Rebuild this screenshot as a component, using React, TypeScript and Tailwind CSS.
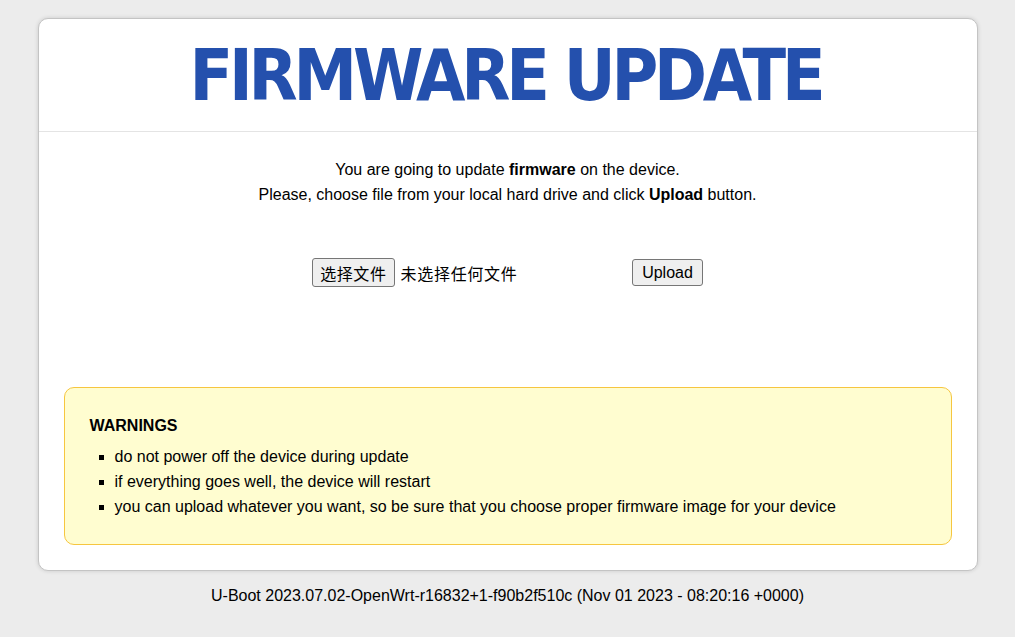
import React from 'react';

export default function App() {
  const warnings = [
    'do not power off the device during update',
    'if everything goes well, the device will restart',
    'you can upload whatever you want, so be sure that you choose proper firmware image for your device',
  ];

  return (
    <div className="min-h-screen bg-[#ececec] pt-[18px] text-black" style={{ fontFamily: '"Liberation Sans", Arial, sans-serif' }}>
      <div className="mx-auto w-[940px] rounded-[10px] border border-[#c4c4c4] bg-white shadow-[0_0_4px_rgba(0,0,0,0.15)]">
        {/* Header */}
        <div className="flex h-[113px] items-center justify-center border-b border-[#e4e4e4]">
          <h1 className="pr-[4px] text-[71px] font-bold leading-none tracking-[-4.2px] text-[#2450ad]" style={{ fontFamily: '"DejaVu Sans Condensed", "DejaVu Sans", Verdana, sans-serif' }}>
            FIRMWARE UPDATE
          </h1>
        </div>

        {/* Body */}
        <div className="px-[25px] pt-[25px] pb-[25px]">
          <div className="text-center text-[16px] leading-[25px]">
            <p>
              You are going to update <b>firmware</b> on the device.
            </p>
            <p>
              Please, choose file from your local hard drive and click <b>Upload</b> button.
            </p>
          </div>

          <div className="mt-[51px] flex items-center justify-center">
            <div className="flex w-[320px] items-center">
              <button className="h-[29px] rounded-[3px] border border-[#767676] bg-[#efefef] px-[7px] text-[16px] tracking-[0.6px]" style={{ fontFamily: '"Noto Sans CJK SC", sans-serif' }}>
                选择文件
              </button>
              <span className="ml-[6px] text-[16px] tracking-[0.7px]" style={{ fontFamily: '"Noto Sans CJK SC", sans-serif' }}>
                未选择任何文件
              </span>
            </div>
            <button className="h-[27px] rounded-[3px] border border-[#767676] bg-[#efefef] px-[9px] text-[16px]">Upload</button>
          </div>

          <div className="mt-[100px] rounded-[10px] border border-[#f6c63f] bg-[#fffdd0] px-[25px] pt-[28px] pb-[25px]">
            <h3 className="text-[16px] font-bold leading-[20px]">WARNINGS</h3>
            <ul className="mt-[8px] list-[square] pl-[25px] text-[16px] leading-[25px]">
              {warnings.map((w) => (
                <li key={w}>{w}</li>
              ))}
            </ul>
          </div>
        </div>
      </div>

      <div className="mt-[13px] text-center text-[16px]">U-Boot 2023.07.02-OpenWrt-r16832+1-f90b2f510c (Nov 01 2023 - 08:20:16 +0000)</div>
    </div>
  );
}
